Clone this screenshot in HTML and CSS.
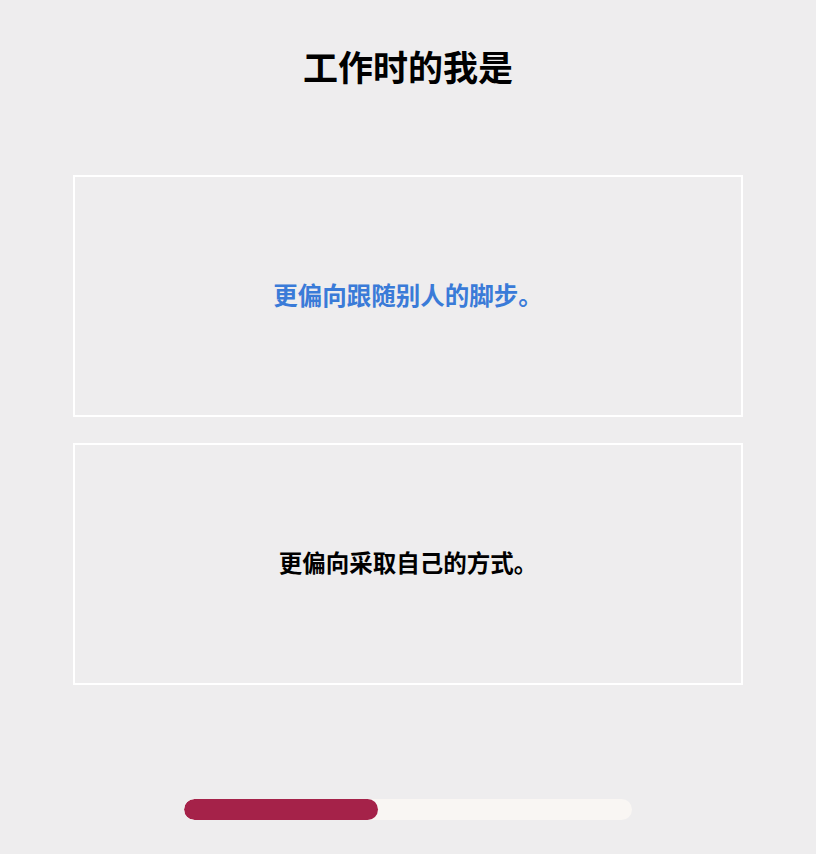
FILE: index.html
```html
<!DOCTYPE html>
<html lang="zh-CN">
<head>
<meta charset="utf-8">
<link rel="stylesheet" href="styles.css">
</head>
<body>
<main class="page">
  <h1 class="title">工作时的我是</h1>
  <div class="options">
    <div class="option selected">更偏向跟随别人的脚步。</div>
    <div class="option">更偏向采取自己的方式。</div>
  </div>
  <div class="progress">
    <div class="progress-fill" style="width: 43.3%"></div>
  </div>
</main>
</body>
</html>
```
FILE: styles.css
```css
html, body {
  margin: 0;
  padding: 0;
  background: #eeedee;
}
body {
  width: 816px;
  height: 854px;
  font-family: "Noto Sans CJK SC", "Noto Sans", sans-serif;
  color: #000;
}
.page {
  display: flex;
  flex-direction: column;
  align-items: center;
  padding-top: 41px;
}
.title {
  margin: 0;
  font-size: 35px;
  font-weight: 700;
  line-height: 50px;
  height: 50px;
}
.options {
  margin-top: 84px;
  display: flex;
  flex-direction: column;
  gap: 26px;
}
.option {
  box-sizing: border-box;
  width: 670px;
  height: 242px;
  padding-bottom: 4px;
  border: 2px solid #ffffff;
  display: flex;
  align-items: center;
  justify-content: center;
  font-size: 23.5px;
  font-weight: 700;
  color: #000;
}
.option.selected {
  color: #3a7bd8;
  font-size: 24.5px;
}
.progress {
  margin-top: 114px;
  width: 448px;
  height: 21px;
  border-radius: 11px;
  background: #f9f6f3;
  overflow: hidden;
}
.progress-fill {
  height: 100%;
  background: #a52249;
  border-radius: 11px;
}
```
